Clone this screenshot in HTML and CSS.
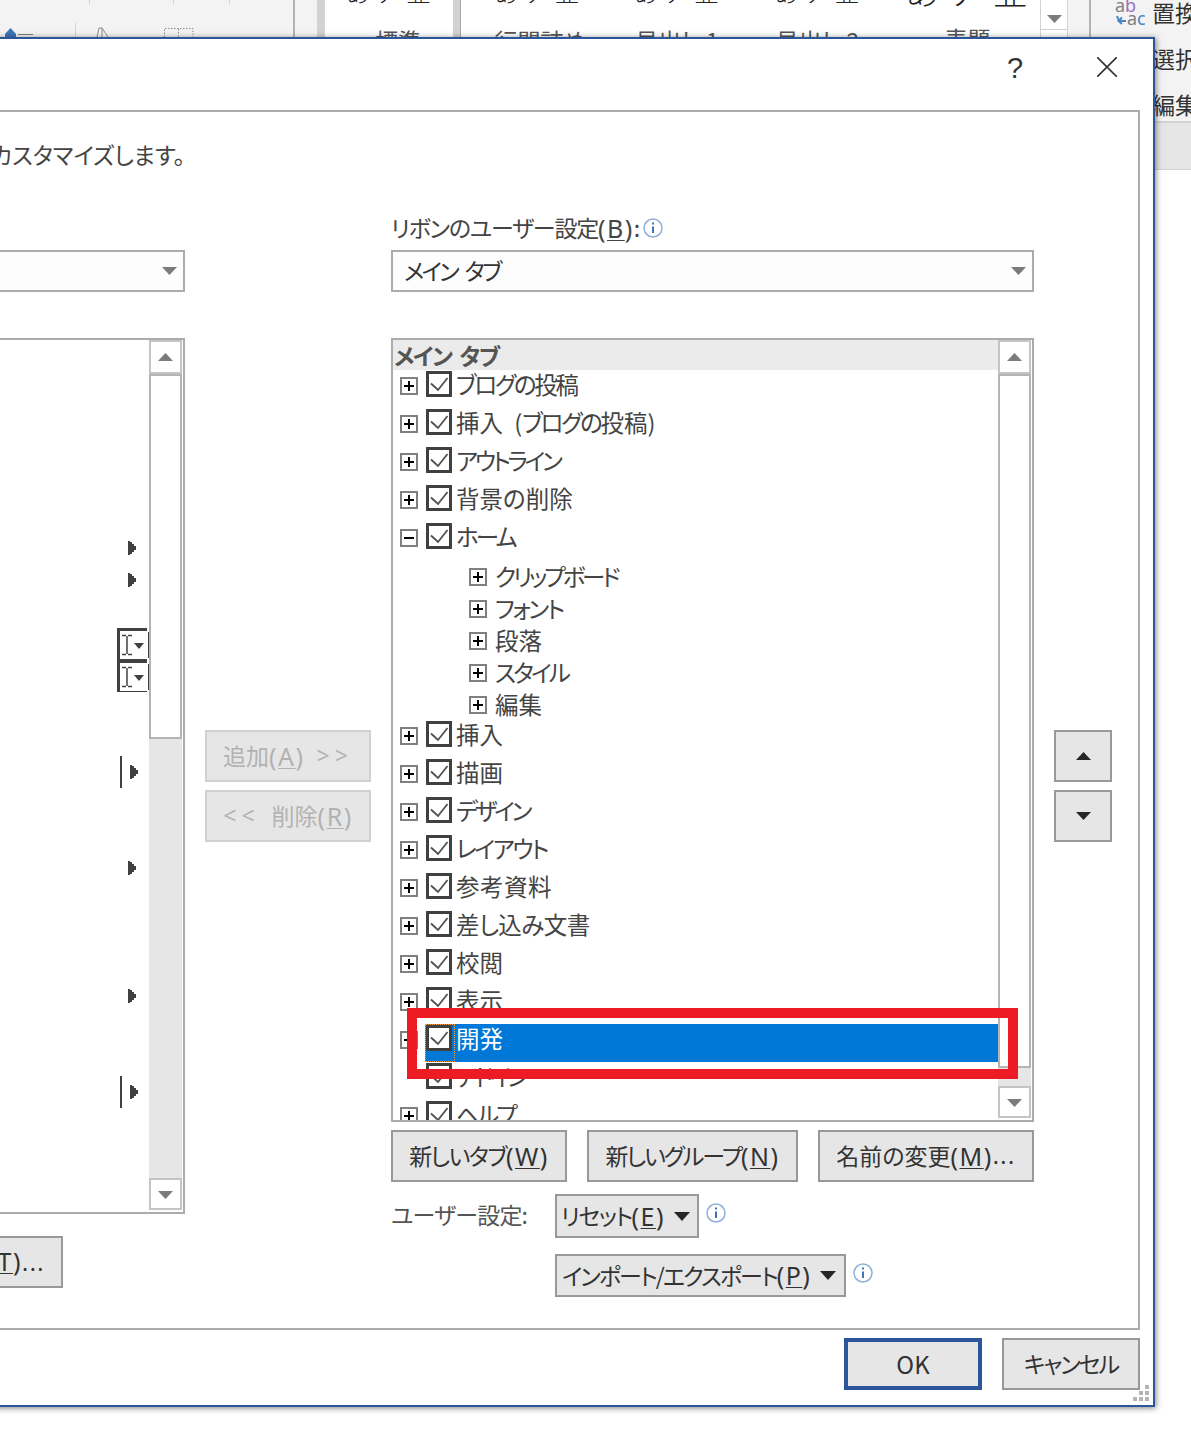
FILE: index.html
```html
<!DOCTYPE html>
<html lang="ja">
<head>
<meta charset="utf-8">
<title>Wordのオプション</title>
<link rel="stylesheet" href="styles.css">
</head>
<body>
<svg class="defs" width="0" height="0" aria-hidden="true">
  <symbol id="chk" viewBox="0 0 26 26"><rect x="1.5" y="1.5" width="23" height="23" fill="#fff" stroke="#404040" stroke-width="3"/><path d="M5 12.5l7 6.5L21.500 7" fill="none" stroke="#505050" stroke-width="1.800"/></symbol>
  <symbol id="plus" viewBox="0 0 18 18"><rect x="1" y="1" width="16" height="16" fill="#fff" stroke="#808080" stroke-width="2"/><path d="M4 9h10M9 4v10" stroke="#000" stroke-width="2"/></symbol>
  <symbol id="minus" viewBox="0 0 18 18"><rect x="1" y="1" width="16" height="16" fill="#fff" stroke="#808080" stroke-width="2"/><path d="M4 9h10" stroke="#000" stroke-width="2"/></symbol>
  <symbol id="info" viewBox="0 0 20 20"><circle cx="10" cy="10" r="9" fill="#fff" stroke="#8fb0d9" stroke-width="1.500"/><path d="M10 8.500v6.500" stroke="#3f74b5" stroke-width="2"/><path d="M10 4.500v2" stroke="#3f74b5" stroke-width="2"/></symbol>
  <symbol id="tri" viewBox="0 0 8 14"><path d="M0 0h2v1h2v2h2v2h2v4h-2v2h-2v2h-2v1h-2z" fill="#404040"/></symbol>
  <symbol id="fontbox" viewBox="0 0 32 32"><path d="M1.500 32V1.500H30" fill="none" stroke="#404040" stroke-width="3"/><path d="M3 31.500h27M31.500 4v26" fill="none" stroke="#404040"/><path d="M5 7.500h4M11 7.500h4M5 26.500h4M11 26.500h4" fill="none" stroke="#404040" stroke-width="1.500"/><path d="M10 8v18" fill="none" stroke="#404040" stroke-width="1.500"/><path d="M17 15h10l-5 6z" fill="#404040"/></symbol>
</svg>

<div class="ribbon">
  <div class="rib-home">
    <svg class="rib-marks" width="295" height="37" viewBox="0 0 295 37">
      <path d="M89.500 0v4M173.500 0v4M229.500 0v4M75.500 23v14" stroke="#d2d2d2" fill="none"/>
      <path d="M5 37v-3l5.500-6 5.500 6v3z" fill="#3f74b5"/>
      <path d="M18 34.500h15" stroke="#7a7a7a" fill="none"/>
      <path d="M97 37l2-9h3l6 9M102 28v9" stroke="#8a8a8a" fill="none"/>
      <path d="M164.500 37v-8.500h28.500v8.500M178.500 29v8" stroke="#8a8a8a" stroke-dasharray="1.500 1.500" fill="none"/>
    </svg>
  </div>
  <div class="rib-space"></div>
  <div class="rib-band"></div>
  <div class="gallery-cell cell-a"><div class="sample">あ ア 亜</div><div class="style-name">標準</div></div>
  <div class="rib-band rib-band-line"></div>
  <div class="gallery-cell cell-b"><div class="sample">あ ア 亜</div><div class="style-name">行間詰め</div></div>
  <div class="gallery-cell cell-c"><div class="sample">あ ア 亜</div><div class="style-name">見出し 1</div></div>
  <div class="gallery-cell cell-d"><div class="sample">あ ア 亜</div><div class="style-name">見出し 2</div></div>
  <div class="gallery-cell cell-e"><div class="sample sample-big">あ ア 亜</div><div class="style-name">表題</div></div>
  <div class="gallery-scroll">
    <div class="gallery-more"><svg class="tri-down" width="15" height="8" viewBox="0 0 15 8"><path d="M0 0h15L7.500 8z" fill="#7b7b7b"/></svg></div>
    <div class="gallery-more-2"></div>
  </div>
  <div class="rib-gap"></div>
  <div class="rib-edit">
    <div class="edit-items">
      <div class="edit-row"><svg class="replace-icon" width="30" height="30" viewBox="0 0 30 30"><text x="0" y="14" class="ri-gray">a</text><text x="10" y="14" class="ri-purple">b</text><path d="M2 18l2 5h7M7 19.500l-3.500 3.500 3.500 3" fill="none" stroke="#4a86c5" stroke-width="2"/><text x="12" y="27" class="ri-gray">a</text><text x="22" y="27" class="ri-blue">c</text></svg><span>置換</span></div>
      <div class="edit-row edit-row-plain"><span>選択</span></div>
      <div class="edit-row edit-row-plain"><span>編集</span></div>
    </div>
    <div class="rib-tail"></div>
  </div>
</div>

<div class="dialog">
  <div class="titlebar">
    <span class="help">?</span>
    <svg class="close" width="20" height="20" viewBox="0 0 20 20"><path d="M0 0l20 20M20 0L0 20" stroke="#333" stroke-width="1.600" fill="none"/></svg>
  </div>

  <div class="panel">
    <p class="desc"><span>リボンとショートカットキーをカスタマイズします。</span></p>
    <div class="columns">

      <div class="col-left">
        <div class="label-row"></div>
        <div class="combo"><svg class="tri-down" width="15" height="8" viewBox="0 0 15 8"><path d="M0 0h15L7.500 8z" fill="#7b7b7b"/></svg></div>
        <div class="listbox listbox-left">
          <ul class="cmds">
            <li></li><li></li><li></li><li></li><li></li><li></li>
            <li><svg class="tri"><use href="#tri"/></svg></li>
            <li><svg class="tri"><use href="#tri"/></svg></li>
            <li></li>
            <li class="flush"><svg class="fontbox"><use href="#fontbox"/></svg></li>
            <li class="flush"><svg class="fontbox"><use href="#fontbox"/></svg></li>
            <li></li><li></li>
            <li><span class="bar"></span><svg class="tri tri-near"><use href="#tri"/></svg></li>
            <li></li><li></li>
            <li><svg class="tri"><use href="#tri"/></svg></li>
            <li></li><li></li><li></li>
            <li><svg class="tri"><use href="#tri"/></svg></li>
            <li></li><li></li>
            <li><span class="bar"></span><svg class="tri tri-near"><use href="#tri"/></svg></li>
          </ul>
          <div class="scrollbar">
            <div class="sb-btn"><svg width="15" height="8" viewBox="0 0 15 8"><path d="M0 8h15L7.500 0z" fill="#7b7b7b"/></svg></div>
            <div class="sb-thumb sb-thumb-left"></div>
            <div class="sb-track"></div>
            <div class="sb-btn"><svg width="15" height="8" viewBox="0 0 15 8"><path d="M0 0h15L7.500 8z" fill="#7b7b7b"/></svg></div>
          </div>
        </div>
        <button class="btn btn-shortcut"><span>ユーザー設定<span class="acc">(<u>T</u>)</span><span class="dots">...</span></span></button>
      </div>

      <div class="col-mid">
        <button class="btn btn-off">追加<span class="acc">(<u>A</u>)</span><span class="arrows">&gt;&gt;</span></button>
        <button class="btn btn-off"><span class="arrows arrows-first">&lt;&lt;</span>削除<span class="acc">(<u>R</u>)</span></button>
      </div>

      <div class="col-right">
        <div class="label-row"><span class="ribbon-label">リボンのユーザー設定</span><span class="acc">(<u>B</u>)</span><span>:</span><svg class="info"><use href="#info"/></svg></div>
        <div class="combo"><span class="combo-text">メイン タブ</span><svg class="tri-down" width="15" height="8" viewBox="0 0 15 8"><path d="M0 0h15L7.500 8z" fill="#7b7b7b"/></svg></div>
        <div class="listbox listbox-right">
          <div class="tree">
            <div class="tree-head">メイン タブ</div>
            <div class="row"><svg class="plus"><use href="#plus"/></svg><svg class="chk"><use href="#chk"/></svg><span class="tight-s">ブログの投稿</span></div>
            <div class="row"><svg class="plus"><use href="#plus"/></svg><svg class="chk"><use href="#chk"/></svg><span class="spaced">挿入 (<i class="tight-s">ブログの</i>投稿)</span></div>
            <div class="row"><svg class="plus"><use href="#plus"/></svg><svg class="chk"><use href="#chk"/></svg><span class="tight-l">アウトライン</span></div>
            <div class="row"><svg class="plus"><use href="#plus"/></svg><svg class="chk"><use href="#chk"/></svg><span>背景の削除</span></div>
            <div class="row"><svg class="plus"><use href="#minus"/></svg><svg class="chk"><use href="#chk"/></svg><span class="tight-m">ホーム</span></div>
            <div class="sub"><svg class="plus"><use href="#plus"/></svg><span class="tight-l">クリップボード</span></div>
            <div class="sub"><svg class="plus"><use href="#plus"/></svg><span class="tight-s">フォント</span></div>
            <div class="sub"><svg class="plus"><use href="#plus"/></svg><span>段落</span></div>
            <div class="sub"><svg class="plus"><use href="#plus"/></svg><span class="tight-m">スタイル</span></div>
            <div class="sub"><svg class="plus"><use href="#plus"/></svg><span>編集</span></div>
            <div class="row"><svg class="plus"><use href="#plus"/></svg><svg class="chk"><use href="#chk"/></svg><span>挿入</span></div>
            <div class="row"><svg class="plus"><use href="#plus"/></svg><svg class="chk"><use href="#chk"/></svg><span>描画</span></div>
            <div class="row"><svg class="plus"><use href="#plus"/></svg><svg class="chk"><use href="#chk"/></svg><span class="tight-l">デザイン</span></div>
            <div class="row"><svg class="plus"><use href="#plus"/></svg><svg class="chk"><use href="#chk"/></svg><span class="tight-s">レイアウト</span></div>
            <div class="row"><svg class="plus"><use href="#plus"/></svg><svg class="chk"><use href="#chk"/></svg><span class="wide">参考資料</span></div>
            <div class="row"><svg class="plus"><use href="#plus"/></svg><svg class="chk"><use href="#chk"/></svg><span class="tight-xs">差し込み文書</span></div>
            <div class="row"><svg class="plus"><use href="#plus"/></svg><svg class="chk"><use href="#chk"/></svg><span>校閲</span></div>
            <div class="row"><svg class="plus"><use href="#plus"/></svg><svg class="chk"><use href="#chk"/></svg><span>表示</span></div>
            <div class="row row-selected"><svg class="plus"><use href="#minus"/></svg><svg class="chk"><use href="#chk"/></svg><span>開発</span></div>
            <div class="row row-noexpand"><svg class="chk"><use href="#chk"/></svg><span class="tight-l">アドイン</span></div>
            <div class="row"><svg class="plus"><use href="#plus"/></svg><svg class="chk"><use href="#chk"/></svg><span class="tight-m">ヘルプ</span></div>
          </div>
          <div class="scrollbar">
            <div class="sb-btn"><svg width="15" height="8" viewBox="0 0 15 8"><path d="M0 8h15L7.500 0z" fill="#7b7b7b"/></svg></div>
            <div class="sb-thumb sb-thumb-right"></div>
            <div class="sb-track"></div>
            <div class="sb-btn"><svg width="15" height="8" viewBox="0 0 15 8"><path d="M0 0h15L7.500 8z" fill="#7b7b7b"/></svg></div>
          </div>
        </div>
        <div class="tree-actions">
          <button class="btn btn-tab"><span class="tight-n">新しいタブ</span><span class="acc">(<u>W</u>)</span></button>
          <button class="btn btn-group"><span class="tight-g">新しいグループ</span><span class="acc">(<u>N</u>)</span></button>
          <button class="btn btn-rename"><span>名前の変更</span><span class="acc">(<u>M</u>)</span><span class="dots">...</span></button>
        </div>
        <div class="custom">
          <span class="custom-label">ユーザー設定:</span>
          <div class="custom-line">
            <button class="btn btn-reset"><span class="tight-r">リセット</span><span class="acc">(<u>E</u>)</span><svg class="btn-caret" width="16" height="9" viewBox="0 0 16 9"><path d="M0 0h16L8 9z" fill="#262626"/></svg></button>
            <svg class="info info-after"><use href="#info"/></svg>
          </div>
          <span></span>
          <div class="custom-line">
            <button class="btn btn-import"><span class="tight-i">インポート/エクスポート</span><span class="acc">(<u>P</u>)</span><svg class="btn-caret" width="16" height="9" viewBox="0 0 16 9"><path d="M0 0h16L8 9z" fill="#262626"/></svg></button>
            <svg class="info info-after"><use href="#info"/></svg>
          </div>
        </div>
      </div>

      <div class="col-move">
        <button class="btn btn-move"><svg width="15" height="8" viewBox="0 0 15 8"><path d="M0 8h15L7.500 0z" fill="#262626"/></svg></button>
        <button class="btn btn-move"><svg width="15" height="8" viewBox="0 0 15 8"><path d="M0 0h15L7.500 8z" fill="#262626"/></svg></button>
      </div>
    </div>
  </div>

  <div class="footer">
    <button class="btn btn-ok">OK</button>
    <button class="btn btn-cancel">キャンセル</button>
  </div>
  <svg class="grip" width="16" height="16" viewBox="0 0 16 16"><path d="M12 0h4v4h-4zM6 6h4v4H6zM12 6h4v4h-4zM0 12h4v4H0zM6 12h4v4H6zM12 12h4v4h-4z" fill="#b4b4b4"/></svg>
</div>

<div class="highlight"></div>
</body>
</html>
```

FILE: styles.css
```css
* { box-sizing: border-box; }

html, body { margin: 0; padding: 0; }

body {
  position: relative;
  width: 1191px;
  height: 1448px;
  overflow: hidden;
  background: #fff;
  color: #444;
  font-family: "Noto Sans CJK JP", "Noto Sans", sans-serif;
  font-size: 23px;
  font-feature-settings: "palt";
  line-height: 1.2;
}

.defs { position: absolute; }

u { text-underline-offset: 2px; text-decoration-thickness: 1px; }
i { font-style: normal; }

/* accelerator key such as (W), set wider than the kana around it */
.acc { font-family: "Noto Sans", sans-serif; font-size: 25px; line-height: 1; letter-spacing: 1.5px; }
.dots { font-family: "Noto Sans", sans-serif; letter-spacing: 1.5px; }
.arrows { font-family: "Noto Sans", sans-serif; letter-spacing: 5px; margin-left: 12px; }
.arrows-first { margin-left: 0; margin-right: 12px; }

/* background ribbon */
.ribbon { display: flex; height: 170px; }
.ribbon > * { flex: none; }

.rib-home {
  width: 295px;
  height: 37px;
  background: #f3f3f3;
  border-right: 2px solid #b5b5b5;
}
.rib-marks { display: block; }

.rib-space { width: 22px; height: 37px; background: #f3f3f3; }
.rib-band { width: 8px; height: 37px; background: #d2d2d2; }
.rib-band-line { border-right: 1px solid #a8a8a8; }

.gallery-cell { height: 60px; overflow: hidden; text-align: center; color: #333; }
.cell-a { width: 128px; }
.cell-b { width: 153px; }
.cell-c { width: 126px; }
.cell-d { width: 155px; }
.cell-e { width: 145px; }

.sample {
  margin-top: -26px;
  height: 36px;
  font-size: 24px;
  line-height: 36px;
  font-weight: 300;
  color: #222;
  letter-spacing: 1px;
}
.sample-big { font-size: 34px; letter-spacing: 2px; margin-top: -28px; height: 38px; line-height: 38px; }
.style-name { margin-top: 16px; font-size: 23px; line-height: 28px; color: #555; }
.cell-a .style-name { padding-left: 18px; }
.cell-b .style-name { padding-left: 6px; }
.cell-e .sample-big + .style-name { margin-top: 14px; }

.gallery-scroll { width: 28px; height: 37px; border-left: 1px solid #d2d2d2; border-right: 1px solid #d2d2d2; }
.gallery-more { height: 30px; display: flex; align-items: center; justify-content: center; padding-top: 8px; border-bottom: 1px solid #d2d2d2; }
.tri-down { display: block; }

.rib-gap { width: 23px; height: 123px; background: #f3f3f3; border-right: 2px solid #b5b5b5; }

.rib-edit { width: 100px; overflow: hidden; }
.edit-items { height: 123px; overflow: hidden; background: #f3f3f3; padding-left: 24px; border-bottom: 2px solid #d2d2d2; }
.rib-tail { height: 47px; background: #e6e6e6; border-bottom: 1px solid #d2d2d2; }
.edit-row { display: flex; align-items: center; gap: 7px; height: 46px; color: #333; font-size: 23px; white-space: nowrap; }
.edit-row:first-child { margin-top: -10px; }
.edit-row-plain { padding-left: 37px; }
.replace-icon { flex: none; }
.ri-gray { fill: #808080; font-size: 18px; font-family: "Noto Sans", sans-serif; }
.ri-purple { fill: #9b6fc0; font-size: 18px; font-family: "Noto Sans", sans-serif; }
.ri-blue { fill: #4a86c5; font-size: 18px; font-family: "Noto Sans", sans-serif; }

/* dialog */
.dialog {
  position: absolute;
  left: -12px;
  top: 37px;
  width: 1167px;
  height: 1370px;
  background: #fff;
  border: 2px solid #2b579a;
  box-shadow: 1px 1px 6px rgba(0, 0, 0, 0.5);
}

.titlebar {
  display: flex;
  justify-content: flex-end;
  align-items: flex-start;
  gap: 70px;
  height: 71px;
  padding: 18px 36px 0 0;
}
.help {
  width: 24px;
  height: 22px;
  font-family: "Liberation Sans", sans-serif;
  font-size: 29px;
  line-height: 22px;
  text-align: center;
  color: #333;
}
.close { display: block; }

.panel {
  height: 1220px;
  margin-right: 13px;
  border: 2px solid #ababab;
}

.desc {
  display: flex;
  justify-content: flex-end;
  width: 193px;
  height: 40px;
  margin: 22px 0 36px;
  line-height: 40px;
  white-space: nowrap;
}
.desc span { flex: none; }

.columns {
  display: grid;
  grid-template-columns: 193px 166px 643px 58px;
  column-gap: 20px;
}

.label-row {
  display: flex;
  align-items: center;
  height: 36px;
  margin-bottom: 4px;
  white-space: nowrap;
}
.ribbon-label { letter-spacing: -1.2px; }
.info { width: 20px; height: 20px; flex: none; margin-left: 3px; }

.combo {
  display: flex;
  align-items: center;
  justify-content: space-between;
  height: 42px;
  margin-bottom: 46px;
  padding: 0 6px 0 11px;
  background: #fdfdfd;
  border: 2px solid #ababab;
}
.col-left .combo { justify-content: flex-end; }
.combo-text { color: #333; letter-spacing: -2.6px; word-spacing: 5px; }

.listbox {
  display: flex;
  border: 2px solid #ababab;
  background: #fff;
  overflow: hidden;
}
.listbox-left { height: 876px; }
.listbox-right { height: 784px; }

.scrollbar {
  display: flex;
  flex-direction: column;
  flex: none;
  width: 33px;
  margin-right: 1px;
  padding-bottom: 2px;
  background: #fff;
}
.sb-btn {
  display: flex;
  align-items: center;
  justify-content: center;
  flex: none;
  height: 34px;
  background: #fff;
  border: 2px solid #c4c4c4;
}
.scrollbar .sb-btn:last-child { height: 32px; padding-top: 2px; }
.sb-thumb { flex: none; background: #fff; border: 2px solid #b4b4b4; }
.sb-thumb-left { height: 365px; }
.sb-thumb-right { height: 694px; }
.sb-track { flex: 1; background: #e6e6e6; }

/* commands list */
.cmds {
  flex: 1;
  list-style: none;
  margin: 0;
  padding: 0;
}
.cmds li {
  display: flex;
  align-items: center;
  justify-content: flex-end;
  height: 32px;
  padding-right: 13px;
}
.cmds li.flush { padding-right: 0; }
.tri { display: block; width: 8px; height: 14px; flex: none; }
.tri-near { margin-left: 8px; margin-right: -2px; }
.bar { width: 2px; height: 32px; background: #404040; }
.fontbox { display: block; width: 32px; height: 32px; }

/* tree */
.tree { flex: 1; min-width: 0; overflow: hidden; }
.tree-head {
  height: 30px;
  margin-bottom: -4px;
  padding-left: 1px;
  background: #ebebeb;
  color: #555;
  font-weight: 700;
  line-height: 30px;
  letter-spacing: -1.5px;
  word-spacing: 4px;
}
.row {
  position: relative;
  display: flex;
  align-items: center;
  height: 38px;
  padding-left: 7px;
  white-space: nowrap;
}
.row span { position: relative; margin: -2px 0 0 4px; font-size: 23.5px; }
.plus { width: 18px; height: 18px; flex: none; margin-top: 2px; }
.chk { position: relative; width: 26px; height: 26px; flex: none; margin-left: 8px; margin-top: -2px; }
.row-noexpand { padding-left: 25px; }

.row .tight-xs, .sub .tight-xs { letter-spacing: -0.5px; }
.row .tight-s, .sub .tight-s { letter-spacing: -2.3px; }
.row .tight-m, .sub .tight-m { letter-spacing: -2.8px; }
.row .tight-l, .sub .tight-l { letter-spacing: -3.2px; }
.row .wide { letter-spacing: 0.5px; }
.row .spaced { word-spacing: 6px; }

.tight-n { letter-spacing: -1.5px; }
.tight-g { letter-spacing: -1.9px; }
.tight-r { letter-spacing: -1.5px; }
.tight-i { letter-spacing: -1.9px; }

.row-selected::before {
  content: "";
  position: absolute;
  left: 32px;
  right: 0;
  top: 4px;
  bottom: -4px;
  background: #0078d7;
}
.row-selected::after {
  content: "";
  position: absolute;
  left: 32px;
  width: 28px;
  top: 4px;
  bottom: -4px;
  border: 1px dotted #f09a3a;
}
.row-selected span { color: #fff; }

.sub {
  display: flex;
  align-items: center;
  height: 32px;
  padding: 9px 0 0 76px;
  white-space: nowrap;
}
.sub span { margin-left: 8px; font-size: 23.5px; }
.sub .plus { margin-top: 0; }

/* buttons */
.btn {
  display: flex;
  align-items: center;
  justify-content: center;
  margin: 0;
  padding: 0;
  font: inherit;
  font-feature-settings: "palt";
  color: #333;
  background: #e6e6e6;
  border: 2px solid #999;
  white-space: nowrap;
}

.btn-shortcut {
  justify-content: flex-end;
  width: 71px;
  height: 52px;
  margin-top: 22px;
  padding-right: 16px;
}
.btn-shortcut > span { flex: none; }

.col-mid, .col-move { display: flex; flex-direction: column; gap: 8px; padding-top: 520px; }
.btn-off { height: 52px; color: #b2b2b2; border-color: #d0d0d0; }
.btn-move { height: 52px; }

.tree-actions { display: flex; gap: 20px; margin-top: 8px; }
.btn-tab { width: 176px; height: 52px; }
.btn-group { width: 211px; height: 52px; }
.btn-rename { width: 216px; height: 52px; }

.custom {
  display: grid;
  grid-template-columns: 164px 1fr;
  row-gap: 16px;
  align-items: start;
  margin-top: 12px;
}
.custom-label { line-height: 40px; color: #555; letter-spacing: -0.8px; }
.custom-line { display: flex; gap: 7px; }
.btn-reset { justify-content: flex-start; width: 144px; height: 44px; padding-left: 4px; }
.btn-import { justify-content: flex-start; width: 291px; height: 43px; padding-left: 5px; }
.btn-caret { flex: none; margin-left: 9px; }
.info-after { margin: 9px 0 0; }

.footer { display: flex; justify-content: flex-end; gap: 20px; margin-top: 8px; padding-right: 13px; }
.btn-ok { width: 138px; height: 52px; border: 4px solid #2b579a; font-size: 24px; }
.btn-cancel { width: 138px; height: 52px; letter-spacing: -2px; }

.grip { position: absolute; right: 4px; bottom: 4px; }

.highlight {
  position: absolute;
  left: 407px;
  top: 1008px;
  width: 611px;
  height: 71px;
  border: 10px solid #ed1c24;
}
```
